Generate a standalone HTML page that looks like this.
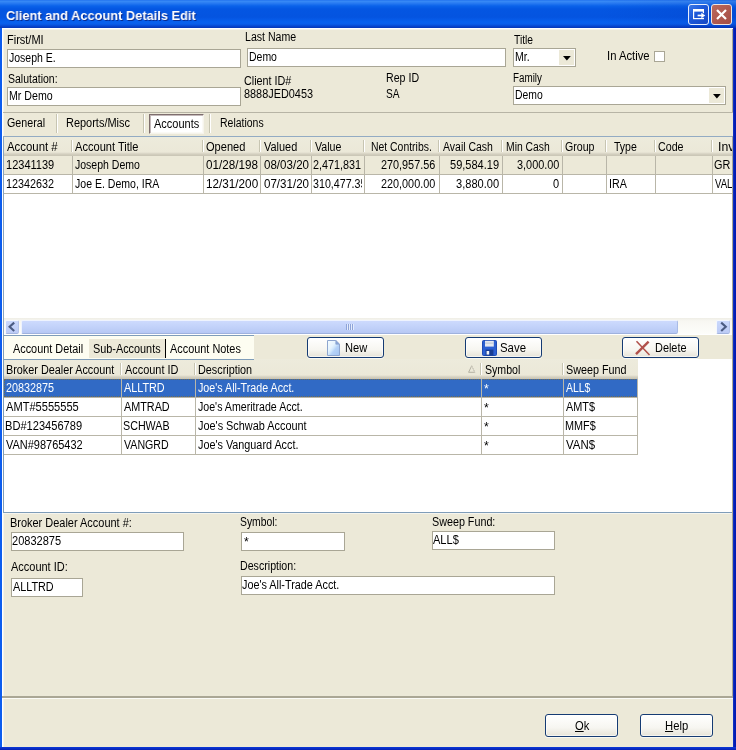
<!DOCTYPE html>
<html lang="en">
<head>
<meta charset="utf-8">
<title>Client and Account Details Edit</title>
<style>
html,body{margin:0;padding:0;}
body{width:736px;height:750px;position:relative;overflow:hidden;background:#ece9d8;font-family:"Liberation Sans",sans-serif;font-size:12px;color:#000;}
.a{position:absolute;}
.t{position:absolute;white-space:nowrap;font:12px/14px "Liberation Sans",sans-serif;transform:scaleX(.895);transform-origin:0 0;color:#000;}
.r{transform-origin:100% 0;text-align:right;}
.w{color:#fff;}
.inp{position:absolute;background:#fff;border:1px solid #a9a695;box-sizing:border-box;}
.hl{position:absolute;height:1px;background:#b9b6a8;}
.vl{position:absolute;width:1px;background:#b9b6a8;}
.btn{position:absolute;box-sizing:border-box;border:1px solid #153b73;border-radius:3px;background:linear-gradient(#ffffff 0%,#f7f6f1 60%,#e6e3d8 100%);box-shadow:inset 0 0 0 1px rgba(255,255,255,.6),0 1px 0 #f8f7f0;}
.hdr{position:absolute;background:linear-gradient(#edebdc 0,#ebe8d8 calc(100% - 4px),#e0dccd calc(100% - 3px),#d4d0c0 calc(100% - 2px),#c8c4b4 100%);}
.hs{position:absolute;width:1px;background:#c7c5b2;box-shadow:1px 0 0 #fff;}
</style>
</head>
<body>

<!-- ===== title bar ===== -->
<div class="a" id="titlebar" style="left:0;top:0;width:736px;height:28px;background:linear-gradient(#1a6aec 0,#3a8cf6 1px,#2a7cf2 3px,#0a62ea 6px,#0456e2 9px,#0454e0 17px,#0860ee 22px,#0a5eea 24px,#0848d2 26px,#0536b6 28px);"></div>
<div class="a" style="left:600px;top:0;width:136px;height:28px;background:linear-gradient(90deg,rgba(0,20,140,0),rgba(0,20,140,.12));"></div>
<div class="t w" style="left:6px;top:8px;font:bold 13.5px/16px 'Liberation Sans',sans-serif;transform:scaleX(.95);text-shadow:1px 1px 0 #0a2a8c;will-change:transform;">Client and Account Details Edit</div>

<!-- restore-ish button -->
<div class="a" style="left:688px;top:4px;width:21px;height:21px;box-sizing:border-box;border:1px solid #e8eefc;border-radius:3px;background:linear-gradient(135deg,#3a78e8 0,#1d58d8 45%,#1848c4 100%);"></div>
<svg class="a" style="left:688px;top:4px" width="21" height="21" viewBox="0 0 21 21"><rect x="5.6" y="5.6" width="9.8" height="9" fill="none" stroke="#fff" stroke-width="1.2"/><rect x="5" y="5" width="11" height="2.6" fill="#fff"/><rect x="14.4" y="9.2" width="2.4" height="4.6" fill="#1c54d2"/><path d="M9.6 11.5h4.6" stroke="#fff" stroke-width="1.7" fill="none"/><path d="M13.3 8.7l3.9 2.8-3.9 2.8z" fill="#fff"/></svg>
<!-- close button -->
<div class="a" style="left:711px;top:4px;width:21px;height:21px;box-sizing:border-box;border:1px solid #efe4e0;border-radius:3px;background:linear-gradient(135deg,#bb6a5e 0,#b05a50 50%,#a44e46 100%);"></div>
<svg class="a" style="left:711px;top:4px" width="21" height="21" viewBox="0 0 21 21"><path d="M6 6l9 9M15 6l-9 9" stroke="#fff" stroke-width="2.2" fill="none"/></svg>

<!-- ===== window frame ===== -->
<div class="a" style="left:0;top:28px;width:2px;height:722px;background:#0c5cee;"></div>
<div class="a" style="left:2px;top:28px;width:1px;height:719px;background:#ffffff;"></div>
<div class="a" style="left:3px;top:28px;width:1px;height:719px;background:#f5f3ea;"></div>
<div class="a" style="left:2px;top:28px;width:731px;height:1px;background:#ffffff;"></div>
<div class="a" style="left:3px;top:29px;width:729px;height:1px;background:#f5f3ea;"></div>
<div class="a" style="left:733px;top:28px;width:3px;height:722px;background:linear-gradient(90deg,#1a3cc8,#0520b8 1px,#0018b0);"></div>
<div class="a" style="left:0;top:747px;width:736px;height:3px;background:linear-gradient(#0c3ad8,#061fb4);"></div>
<!-- main panel right + bottom edge -->
<div class="a" style="left:732px;top:29px;width:1px;height:84px;background:#aaa795;"></div>
<div class="a" style="left:732px;top:136px;width:1px;height:561px;background:#aaa795;"></div>
<div class="a" style="left:2px;top:696px;width:731px;height:2px;background:#aaa795;"></div>
<div class="a" style="left:3px;top:698px;width:730px;height:1px;background:#fbfbf6;"></div>

<!-- ===== top form ===== -->
<div class="inp" style="left:7px;top:49px;width:234px;height:19px"></div>

<div class="inp" style="left:247px;top:48px;width:259px;height:19px"></div>

<div class="inp" style="left:513px;top:48px;width:63px;height:19px"></div>
<div class="a" style="left:559px;top:50px;width:15px;height:15px;background:#ece9d8;"></div>
<svg class="a" style="left:562.6px;top:56px" width="9" height="5"><path d="M0 0h7.8L3.9 4.4z" fill="#000"/></svg>

<div class="inp" style="left:654px;top:51px;width:11px;height:11px;"></div>

<div class="inp" style="left:7px;top:87px;width:234px;height:19px"></div>

<div class="inp" style="left:513px;top:86px;width:213px;height:19px"></div>
<div class="a" style="left:709px;top:88px;width:15px;height:15px;background:#ece9d8;"></div>
<svg class="a" style="left:712.6px;top:94px" width="9" height="5"><path d="M0 0h7.8L3.9 4.4z" fill="#000"/></svg>

<!-- separator under form -->
<div class="a" style="left:3px;top:112px;width:730px;height:1px;background:#b7b4a5;"></div>

<!-- ===== main tabs ===== -->
<div class="hs" style="left:56px;top:114px;height:19px"></div>
<div class="hs" style="left:143px;top:114px;height:19px"></div>
<div class="a" style="left:149px;top:114px;width:55px;height:20px;box-sizing:border-box;background:#fff;border-top:1px solid #7e6e6e;border-left:1px solid #7e6e6e;border-right:1px solid #f6f4ec;border-bottom:1px solid #f6f4ec;box-shadow:inset 1px 1px 0 #c4baba,inset -1px -1px 0 #fbfaf5;"></div>
<div class="hs" style="left:209px;top:114px;height:19px"></div>

<!-- ===== grid 1 ===== -->
<div class="a" id="grid1" style="left:3px;top:136px;width:729px;height:199px;box-sizing:border-box;background:#fff;border-top:1px solid #93abc3;border-left:1px solid #8aa4be;"></div>
<div class="hdr" style="left:4px;top:137px;width:728px;height:19px;"></div>
<div class="hs" style="left:71px;top:140px;height:12px"></div>
<div class="hs" style="left:202px;top:140px;height:12px"></div>
<div class="hs" style="left:259px;top:140px;height:12px"></div>
<div class="hs" style="left:310px;top:140px;height:12px"></div>
<div class="hs" style="left:363px;top:140px;height:12px"></div>
<div class="hs" style="left:438px;top:140px;height:12px"></div>
<div class="hs" style="left:501px;top:140px;height:12px"></div>
<div class="hs" style="left:561px;top:140px;height:12px"></div>
<div class="hs" style="left:605px;top:140px;height:12px"></div>
<div class="hs" style="left:654px;top:140px;height:12px"></div>
<div class="hs" style="left:711px;top:140px;height:12px"></div>

<!-- row 1 (cream) -->
<div class="a" style="left:4px;top:156px;width:728px;height:18px;background:#ece9d8;"></div>
<div class="hl" style="left:4px;top:174px;width:728px"></div>
<div class="hl" style="left:4px;top:193px;width:728px"></div>
<div class="vl" style="left:72px;top:156px;height:38px"></div>
<div class="vl" style="left:203px;top:156px;height:38px"></div>
<div class="vl" style="left:260px;top:156px;height:38px"></div>
<div class="vl" style="left:311px;top:156px;height:38px"></div>
<div class="vl" style="left:364px;top:156px;height:38px"></div>
<div class="vl" style="left:439px;top:156px;height:38px"></div>
<div class="vl" style="left:502px;top:156px;height:38px"></div>
<div class="vl" style="left:562px;top:156px;height:38px"></div>
<div class="vl" style="left:606px;top:156px;height:38px"></div>
<div class="vl" style="left:655px;top:156px;height:38px"></div>
<div class="vl" style="left:712px;top:156px;height:38px"></div>

<!-- horizontal scrollbar -->
<div class="a" style="left:4px;top:318px;width:728px;height:16px;background:linear-gradient(#efeee6 0,#f8f7f2 3px,#fdfdfa 100%);"></div>
<div class="a" style="left:5px;top:320px;width:14px;height:14px;box-sizing:border-box;border:1px solid #f4f7fe;border-bottom-color:#a3b5df;border-right-color:#b4c3ea;border-radius:2px;background:linear-gradient(#cad8fc,#bccbf5);"></div>
<svg class="a" style="left:5px;top:319.5px" width="14" height="14"><path d="M9.2 2.6L4.6 6.8l4.6 4.2" stroke="#4a5b82" stroke-width="2.1" fill="none"/></svg>
<div class="a" style="left:21px;top:320px;width:657px;height:14px;box-sizing:border-box;border:1px solid #eef3fe;border-bottom-color:#9fb2de;border-right-color:#a9bbe6;border-radius:2px;background:linear-gradient(#cddafd 0,#c3d3fa 45%,#b7c8f4 100%);"></div>
<div class="a" style="left:346px;top:324px;width:1px;height:6px;background:#8ea4d8;box-shadow:2px 0 0 #8ea4d8,4px 0 0 #8ea4d8,6px 0 0 #8ea4d8,1px 0 0 #e4ecfd,3px 0 0 #e4ecfd,5px 0 0 #e4ecfd,7px 0 0 #e4ecfd;"></div>
<div class="a" style="left:716px;top:320px;width:14px;height:14px;box-sizing:border-box;border:1px solid #f4f7fe;border-bottom-color:#a3b5df;border-right-color:#b4c3ea;border-radius:2px;background:linear-gradient(#cad8fc,#bccbf5);"></div>
<svg class="a" style="left:716px;top:319.5px" width="14" height="14"><path d="M5.2 2.6L9.8 6.8l-4.6 4.2" stroke="#4a5b82" stroke-width="2.1" fill="none"/></svg>

<!-- ===== sub tabs + toolbar ===== -->
<div class="a" style="left:3px;top:335px;width:251px;height:1px;background:#7f9db9;"></div>
<div class="a" style="left:3px;top:336px;width:1px;height:23px;background:#7f9db9;"></div>
<div class="a" style="left:4px;top:336px;width:250px;height:23px;background:#fdfdf1;"></div>
<div class="a" style="left:89px;top:339px;width:76px;height:19px;background:#ece9d8;"></div>
<div class="a" style="left:165px;top:339px;width:1px;height:19px;background:#000;"></div>

<div class="btn" style="left:307px;top:337px;width:77px;height:21px"></div>
<svg class="a" style="left:327px;top:340px" width="13" height="16" viewBox="0 0 13 16"><defs><linearGradient id="pg" x1="0" y1="0" x2="1" y2="1"><stop offset="0" stop-color="#f6fcff"/><stop offset=".38" stop-color="#e6f4fe"/><stop offset=".5" stop-color="#d2e8fc"/><stop offset=".62" stop-color="#b4d2f8"/><stop offset="1" stop-color="#a4c4f2"/></linearGradient></defs><path d="M.5.5h8.3l3.7 3.7v11.3H.5z" fill="url(#pg)" stroke="#8ea6cf"/><path d="M8.8.5v3.7h3.7z" fill="#86a4da" stroke="#8ea6cf" stroke-width=".7"/></svg>

<div class="btn" style="left:465px;top:337px;width:77px;height:21px"></div>
<svg class="a" style="left:482px;top:340px" width="15" height="16" viewBox="0 0 15 16"><rect x=".5" y=".5" width="14" height="15" rx="1" fill="#2c60d2" stroke="#1f4cb4"/><rect x="3" y="0.8" width="8.8" height="5.8" fill="#e4e8f0"/><rect x="3" y="2.6" width="8.8" height="1" fill="#bcc5d4"/><rect x="3.6" y="9.6" width="7.8" height="5.9" fill="#183c92"/><rect x="4.6" y="11" width="2.6" height="3.6" fill="#f2f4f8"/></svg>

<div class="btn" style="left:622px;top:337px;width:77px;height:21px"></div>
<svg class="a" style="left:634px;top:340px" width="18" height="17" viewBox="0 0 18 17"><path d="M2.5 1.2L15.5 15" stroke="#b0504a" stroke-width="1.5" fill="none"/><path d="M14.6 1.6L2 14.2" stroke="#b0504a" stroke-width="2.4" fill="none"/></svg>

<!-- ===== grid 2 ===== -->
<div class="a" id="grid2" style="left:3px;top:359px;width:729px;height:154px;box-sizing:border-box;background:#fff;border-left:1px solid #7f9db9;border-bottom:1px solid #7f9db9;"></div>
<div class="a" style="left:3px;top:513px;width:729px;height:1px;background:#f6f5ee;"></div>
<div class="hdr" style="left:4px;top:359px;width:634px;height:20px;"></div>
<div class="a" style="left:3px;top:359px;width:251px;height:1px;background:#7f9db9;"></div>
<div class="hs" style="left:120px;top:363px;height:12px"></div>
<div class="hs" style="left:194px;top:363px;height:12px"></div>
<div class="hs" style="left:480px;top:363px;height:12px"></div>
<div class="hs" style="left:562px;top:363px;height:12px"></div>
<svg class="a" style="left:467.6px;top:365px" width="8" height="8" viewBox="0 0 8 8"><path d="M3.7 .8L.6 7.3h6.2z" fill="none" stroke="#b4b1a3" stroke-width="1"/><path d="M3.7 .8l3.1 6.5" stroke="#d4d1c4" stroke-width="1" fill="none"/></svg>

<!-- selected row -->
<div class="a" style="left:4px;top:379px;width:634px;height:18px;background:#316ac5;outline:1px dotted #6e6c58;outline-offset:-1px;"></div>
<div class="hl" style="left:4px;top:397px;width:634px"></div>
<div class="hl" style="left:4px;top:416px;width:634px"></div>
<div class="hl" style="left:4px;top:435px;width:634px"></div>
<div class="hl" style="left:4px;top:454px;width:634px"></div>
<div class="vl" style="left:121px;top:379px;height:76px"></div>
<div class="vl" style="left:195px;top:379px;height:76px"></div>
<div class="vl" style="left:481px;top:379px;height:76px"></div>
<div class="vl" style="left:563px;top:379px;height:76px"></div>
<div class="vl" style="left:637px;top:379px;height:76px"></div>

<!-- ===== detail form ===== -->
<div class="inp" style="left:11px;top:532px;width:173px;height:19px"></div>

<div class="inp" style="left:241px;top:532px;width:104px;height:19px"></div>

<div class="inp" style="left:432px;top:531px;width:123px;height:19px"></div>

<div class="inp" style="left:11px;top:578px;width:72px;height:19px"></div>

<div class="inp" style="left:241px;top:576px;width:314px;height:19px"></div>

<!-- ===== bottom buttons ===== -->
<div class="btn" style="left:545px;top:714px;width:73px;height:23px"></div>
<div class="btn" style="left:640px;top:714px;width:73px;height:23px"></div>

<!-- ===== text labels ===== -->
<div class="a" style="left:0;top:0;width:736px;height:750px;will-change:transform;">
<div class="t" style="left:6.78px;top:33px;transform:scaleX(0.916)">First/MI</div>
<div class="t" style="left:8.95px;top:51px;transform:scaleX(0.876)">Joseph E.</div>
<div class="t" style="left:245.32px;top:30px;transform:scaleX(0.882)">Last Name</div>
<div class="t" style="left:248.58px;top:50px;transform:scaleX(0.873)">Demo</div>
<div class="t" style="left:513.70px;top:33px;transform:scaleX(0.855)">Title</div>
<div class="t" style="left:514.82px;top:50px;transform:scaleX(0.883)">Mr.</div>
<div class="t" style="left:607.26px;top:49px;transform:scaleX(0.939)">In Active</div>
<div class="t" style="left:7.58px;top:72px;transform:scaleX(0.874)">Salutation:</div>
<div class="t" style="left:9.31px;top:89px;transform:scaleX(0.886)">Mr Demo</div>
<div class="t" style="left:243.80px;top:74px;transform:scaleX(0.898)">Client ID#</div>
<div class="t" style="left:243.79px;top:87px;transform:scaleX(0.907)">8888JED0453</div>
<div class="t" style="left:385.52px;top:71px;transform:scaleX(0.885)">Rep ID</div>
<div class="t" style="left:386.05px;top:87px;transform:scaleX(0.847)">SA</div>
<div class="t" style="left:512.63px;top:71px;transform:scaleX(0.818)">Family</div>
<div class="t" style="left:515.04px;top:88px;transform:scaleX(0.865)">Demo</div>
<div class="t" style="left:7.06px;top:116px;transform:scaleX(0.891)">General</div>
<div class="t" style="left:66.29px;top:116px;transform:scaleX(0.914)">Reports/Misc</div>
<div class="t" style="left:153.90px;top:117px;transform:scaleX(0.916)">Accounts</div>
<div class="t" style="left:219.83px;top:116px;transform:scaleX(0.873)">Relations</div>
<div class="t" style="left:6.70px;top:140px;transform:scaleX(0.949)">Account #</div>
<div class="t" style="left:75.45px;top:140px;transform:scaleX(0.924)">Account Title</div>
<div class="t" style="left:206.03px;top:140px;transform:scaleX(0.922)">Opened</div>
<div class="t" style="left:263.70px;top:140px;transform:scaleX(0.911)">Valued</div>
<div class="t" style="left:314.95px;top:140px;transform:scaleX(0.885)">Value</div>
<div class="t" style="left:370.58px;top:140px;transform:scaleX(0.868)">Net Contribs.</div>
<div class="t" style="left:442.70px;top:140px;transform:scaleX(0.874)">Avail Cash</div>
<div class="t" style="left:505.59px;top:140px;transform:scaleX(0.863)">Min Cash</div>
<div class="t" style="left:565.32px;top:140px;transform:scaleX(0.884)">Group</div>
<div class="t" style="left:613.70px;top:140px;transform:scaleX(0.877)">Type</div>
<div class="t" style="left:658.31px;top:140px;transform:scaleX(0.891)">Code</div>
<div class="a" style="left:713px;top:137px;width:19px;height:18px;overflow:hidden"><div class="t" style="left:5.38px;top:3px;transform:scaleX(1.020)">Inv</div></div>
<div class="t" style="left:5.53px;top:158px;transform:scaleX(0.918)">12341139</div>
<div class="t" style="left:74.70px;top:158px;transform:scaleX(0.876)">Joseph Demo</div>
<div class="a" style="left:204px;top:156px;width:54px;height:18px;overflow:hidden"><div class="t" style="left:2.20px;top:2px;transform:scaleX(0.973)">01/28/1988</div></div>
<div class="a" style="left:261px;top:156px;width:47.5px;height:18px;overflow:hidden"><div class="t" style="left:2.70px;top:2px;transform:scaleX(0.963)">08/03/2004</div></div>
<div class="a" style="left:312px;top:156px;width:49.5px;height:18px;overflow:hidden"><div class="t" style="left:1.30px;top:2px;transform:scaleX(0.900)">2,471,831.00</div></div>
<div class="t" style="left:381.30px;top:158px;transform:scaleX(0.903)">270,957.56</div>
<div class="t" style="left:450.03px;top:158px;transform:scaleX(0.919)">59,584.19</div>
<div class="t" style="left:516.79px;top:158px;transform:scaleX(0.907)">3,000.00</div>
<div class="a" style="left:713px;top:156px;width:19px;height:18px;overflow:hidden"><div class="t" style="left:1.39px;top:2px;transform:scaleX(0.906)">GR</div></div>
<div class="t" style="left:5.55px;top:177px;transform:scaleX(0.900)">12342632</div>
<div class="t" style="left:74.70px;top:177px;transform:scaleX(0.878)">Joe E. Demo, IRA</div>
<div class="a" style="left:204px;top:175px;width:54px;height:18px;overflow:hidden"><div class="t" style="left:1.97px;top:2px;transform:scaleX(0.977)">12/31/2000</div></div>
<div class="a" style="left:261px;top:175px;width:47.5px;height:18px;overflow:hidden"><div class="t" style="left:2.70px;top:2px;transform:scaleX(0.963)">07/31/2004</div></div>
<div class="a" style="left:312px;top:175px;width:49.5px;height:18px;overflow:hidden"><div class="t" style="left:1.31px;top:2px;transform:scaleX(0.890)">310,477.35</div></div>
<div class="t" style="left:381.30px;top:177px;transform:scaleX(0.903)">220,000.00</div>
<div class="t" style="left:456.28px;top:177px;transform:scaleX(0.923)">3,880.00</div>
<div class="t" style="left:553.20px;top:177px;transform:scaleX(0.917)">0</div>
<div class="t" style="left:608.81px;top:177px;transform:scaleX(0.895)">IRA</div>
<div class="a" style="left:713px;top:175px;width:19px;height:18px;overflow:hidden"><div class="t" style="left:1.70px;top:2px;transform:scaleX(0.800)">VAL</div></div>
<div class="t" style="left:12.70px;top:342px;transform:scaleX(0.906)">Account Detail</div>
<div class="t" style="left:92.55px;top:342px;transform:scaleX(0.905)">Sub-Accounts</div>
<div class="t" style="left:169.70px;top:342px;transform:scaleX(0.908)">Account Notes</div>
<div class="t" style="left:344.78px;top:341px;transform:scaleX(0.924)">New</div>
<div class="t" style="left:500.15px;top:341px;transform:scaleX(0.950)">Save</div>
<div class="t" style="left:654.59px;top:341px;transform:scaleX(0.909)">Delete</div>
<div class="t" style="left:6.30px;top:363px;transform:scaleX(0.902)">Broker Dealer Account</div>
<div class="t" style="left:124.70px;top:363px;transform:scaleX(0.910)">Account ID</div>
<div class="t" style="left:198.30px;top:363px;transform:scaleX(0.902)">Description</div>
<div class="t" style="left:484.82px;top:363px;transform:scaleX(0.883)">Symbol</div>
<div class="t" style="left:566.30px;top:363px;transform:scaleX(0.898)">Sweep Fund</div>
<div class="t w" style="left:5.55px;top:381px;transform:scaleX(0.900)">20832875</div>
<div class="t w" style="left:123.95px;top:381px;transform:scaleX(0.901)">ALLTRD</div>
<div class="t w" style="left:197.95px;top:381px;transform:scaleX(0.893)">Joe's All-Trade Acct.</div>
<div class="t w" style="left:565.95px;top:381px;transform:scaleX(0.868)">ALL$</div>
<div class="t w" style="left:484.28px;top:381.5px;transform:scaleX(1.020)">*</div>
<div class="t" style="left:5.70px;top:400px;transform:scaleX(0.924)">AMT#5555555</div>
<div class="t" style="left:123.95px;top:400px;transform:scaleX(0.901)">AMTRAD</div>
<div class="t" style="left:197.95px;top:400px;transform:scaleX(0.885)">Joe's Ameritrade Acct.</div>
<div class="t" style="left:565.95px;top:400px;transform:scaleX(0.908)">AMT$</div>
<div class="t" style="left:484.28px;top:400.5px;transform:scaleX(1.020)">*</div>
<div class="t" style="left:4.78px;top:419px;transform:scaleX(0.924)">BD#123456789</div>
<div class="t" style="left:123.06px;top:419px;transform:scaleX(0.893)">SCHWAB</div>
<div class="t" style="left:197.95px;top:419px;transform:scaleX(0.907)">Joe's Schwab Account</div>
<div class="t" style="left:565.05px;top:419px;transform:scaleX(0.903)">MMF$</div>
<div class="t" style="left:484.28px;top:419.5px;transform:scaleX(1.020)">*</div>
<div class="t" style="left:5.70px;top:438px;transform:scaleX(0.914)">VAN#98765432</div>
<div class="t" style="left:123.95px;top:438px;transform:scaleX(0.886)">VANGRD</div>
<div class="t" style="left:197.95px;top:438px;transform:scaleX(0.901)">Joe's Vanguard Acct.</div>
<div class="t" style="left:565.95px;top:438px;transform:scaleX(0.952)">VAN$</div>
<div class="t" style="left:484.28px;top:438.5px;transform:scaleX(1.020)">*</div>
<div class="t" style="left:9.54px;top:516px;transform:scaleX(0.913)">Broker Dealer Account #:</div>
<div class="t" style="left:12.03px;top:534px;transform:scaleX(0.919)">20832875</div>
<div class="t" style="left:239.84px;top:515px;transform:scaleX(0.861)">Symbol:</div>
<div class="t" style="left:243.68px;top:534.5px;transform:scaleX(1.020)">*</div>
<div class="t" style="left:432.30px;top:515px;transform:scaleX(0.896)">Sweep Fund:</div>
<div class="t" style="left:433.45px;top:533px;transform:scaleX(0.921)">ALL$</div>
<div class="t" style="left:10.70px;top:560px;transform:scaleX(0.915)">Account ID:</div>
<div class="t" style="left:12.70px;top:580px;transform:scaleX(0.901)">ALLTRD</div>
<div class="t" style="left:239.81px;top:559px;transform:scaleX(0.886)">Description:</div>
<div class="t" style="left:242.45px;top:578px;transform:scaleX(0.902)">Joe's All-Trade Acct.</div>
<div class="t" style="left:574.77px;top:719px;transform:scaleX(0.929)"><u>O</u>k</div>
<div class="t" style="left:665.26px;top:719px;transform:scaleX(0.937)"><u>H</u>elp</div>
</div>
</body>
</html>
